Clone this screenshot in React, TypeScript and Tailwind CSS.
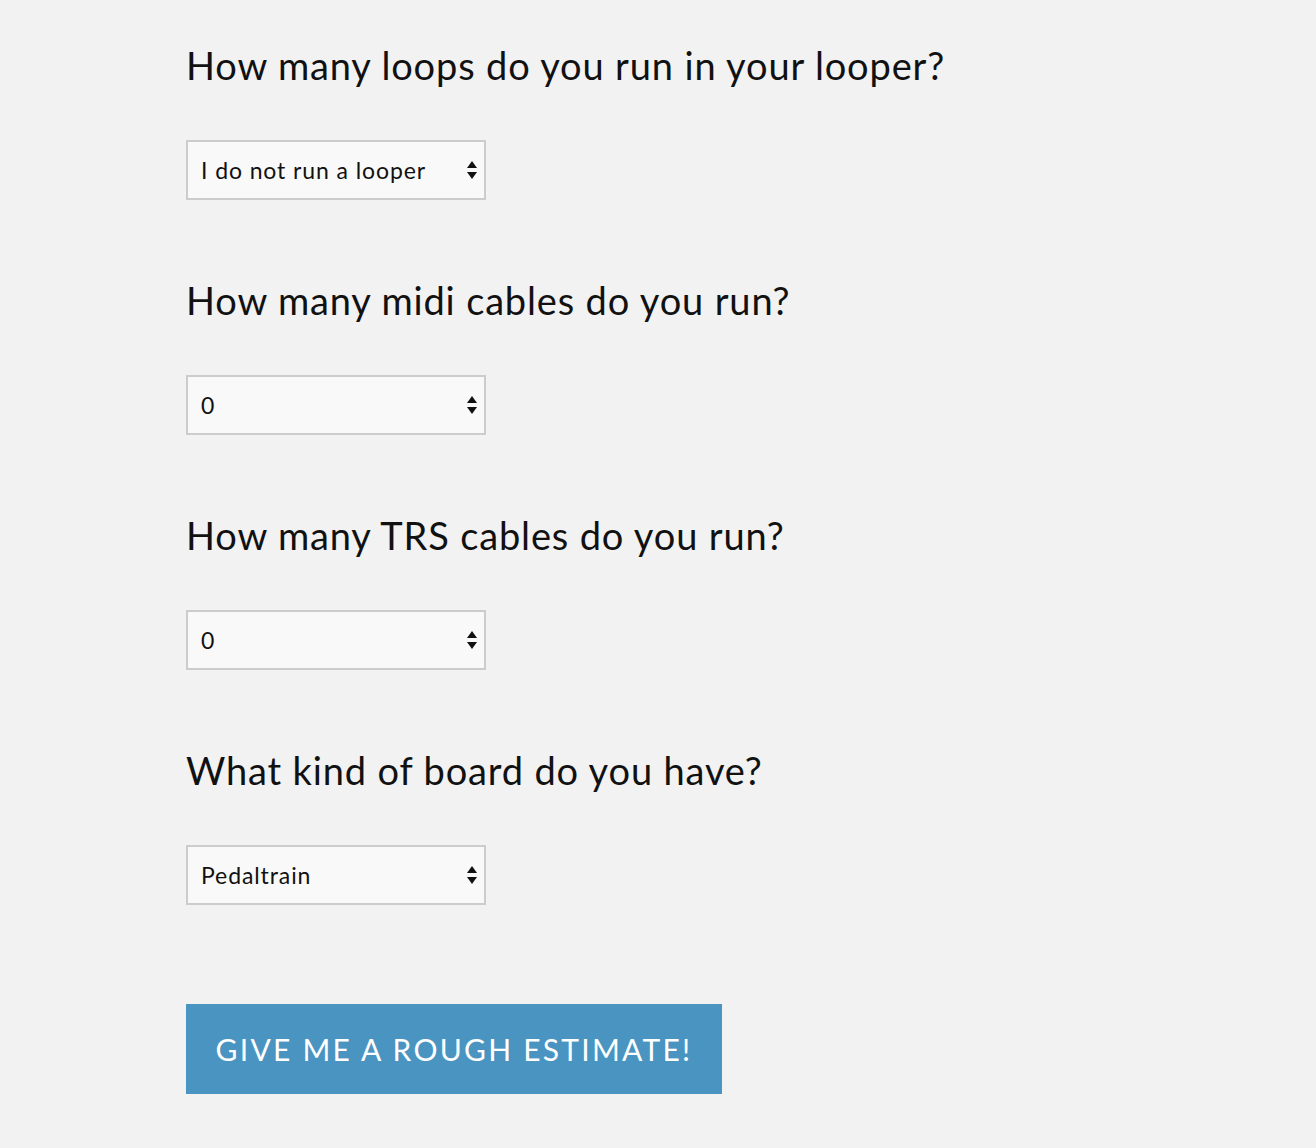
import React from "react";

const questions = [
  { label: "How many loops do you run in your looper?", value: "I do not run a looper" },
  { label: "How many midi cables do you run?", value: "0" },
  { label: "How many TRS cables do you run?", value: "0" },
  { label: "What kind of board do you have?", value: "Pedaltrain" },
];

function Arrows() {
  return (
    <svg width="12" height="24" viewBox="0 0 12 24" className="pointer-events-none absolute right-[6px] top-1/2 -translate-y-1/2">
      <path d="M6 3 L11 10 L1 10 Z" fill="#111" />
      <path d="M1 14 L11 14 L6 21 Z" fill="#111" />
    </svg>
  );
}

export default function App() {
  return (
    <div className="min-h-[1148px] bg-[#f2f2f2] pl-[186px] pt-[41px] font-['Lato',sans-serif] text-[#111]">
      {questions.map((q) => (
        <div key={q.label} className="mb-[76px]">
          <h2 className="text-[38px] font-normal leading-[48px] tracking-[0.85px]">{q.label}</h2>
          <div className="relative mt-[51px] h-[60px] w-[300px] border-2 border-[#cccccc] bg-[#f9f9f9]">
            <select
              defaultValue={q.value}
              className="h-full w-full appearance-none bg-transparent pl-[13px] font-['Lato',sans-serif] text-[23px] font-normal tracking-[0.9px] text-[#111] outline-none"
            >
              <option>{q.value}</option>
            </select>
            <Arrows />
          </div>
        </div>
      ))}
      <button className="mt-[23px] h-[90px] w-[536px] bg-[#4a94c1] text-[30px] font-normal uppercase tracking-[2.25px] text-white">
        Give me a rough estimate!
      </button>
    </div>
  );
}
